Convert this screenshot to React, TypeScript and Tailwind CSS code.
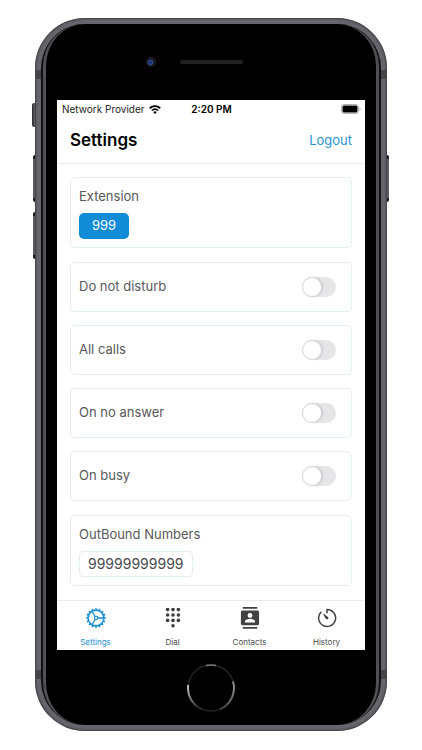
import { useState } from "react";
import type { ReactNode } from "react";

const forwardingOptions = ["Do not disturb", "All calls", "On no answer", "On busy"];

function WifiIcon() {
  return (
    <svg viewBox="0 0 24 18" className="h-[9px] w-3" aria-hidden="true">
      <path d="M1.5 6.5a15.5 15.5 0 0 1 21 0" fill="none" stroke="#000" strokeWidth="3.4" />
      <path d="M5.5 11a9.8 9.8 0 0 1 13 0" fill="none" stroke="#000" strokeWidth="3.2" />
      <path d="M12 18l-3.6-4a5.4 5.4 0 0 1 7.2 0z" fill="#000" />
    </svg>
  );
}

function BatteryIcon() {
  return (
    <svg viewBox="0 0 20 10" className="h-2.5 w-5" aria-hidden="true">
      <rect x="0.5" y="0.5" width="17" height="9" rx="2.5" fill="#fff" stroke="#b5b5b5" />
      <rect x="1.500" y="1.500" width="15" height="7" rx="1.500" fill="#000" />
      <path d="M18.7 3.4c1 .4 1 2.8 0 3.2z" fill="#8a8a8a" />
    </svg>
  );
}

function GearIcon() {
  const teeth = Array.from({ length: 16 }, (_, i) => i * 22.5);
  return (
    <svg viewBox="0 0 20 20" className="size-5" fill="none" stroke="#1d8fd6" aria-hidden="true">
      <circle cx="10" cy="10" r="7.9" strokeWidth="1.600" />
      <circle cx="10" cy="10" r="1.7" strokeWidth="1.2" />
      {teeth.map((angle) => (
        <path key={angle} d="M10 2V.2" strokeWidth="1.700" transform={`rotate(${angle} 10 10)`} />
      ))}
      <path d="M11.7 10h6M9.1 8.5 6.1 3.3M9.1 11.5l-3 5.2" strokeWidth="1.3" />
    </svg>
  );
}

function DialpadIcon() {
  const rows = [1.6, 7, 12.4];
  const columns = [4.6, 10, 15.4];
  return (
    <svg viewBox="0 0 20 20" className="size-5" fill="#3d3d3f" aria-hidden="true">
      {rows.map((y) => columns.map((x) => <circle key={`${x}-${y}`} cx={x} cy={y} r="1.8" />))}
      <circle cx="10" cy="17.8" r="1.8" />
    </svg>
  );
}

function ContactsIcon() {
  return (
    <svg viewBox="0 0 20 22" className="h-[22px] w-5" fill="#424244" aria-hidden="true">
      <path d="M2.8 0h14.4v1.8H2.8zM2.8 20h14.4v1.8H2.8z" />
      <path
        fillRule="evenodd"
        d="M2.6 3.6h14.8c1 0 1.7.7 1.7 1.7v11.2c0 1-.7 1.7-1.7 1.7H2.6c-1 0-1.7-.7-1.7-1.7V5.3c0-1 .7-1.7 1.7-1.7zM10 6a2.4 2.4 0 1 0 0 4.8A2.4 2.4 0 0 0 10 6zM5 15.400h10v-1c0-1.7-3.2-2.6-5-2.6s-5 .9-5 2.6z"
      />
    </svg>
  );
}

function HistoryIcon() {
  return (
    <svg viewBox="0 0 20 20" className="size-5" fill="none" stroke="#424244" aria-hidden="true">
      <path d="M4.200 3.900A8.500 8.500 0 1 0 10 1.500v3.700" strokeWidth="1.500" />
      <path d="M5.800 5.600c1.900 1 4.200 2.400 5.200 3.500a1.300 1.300 0 0 1-1.900 1.900C8 10 6.800 7.600 5.800 5.600z" fill="#424244" stroke="none" />
    </svg>
  );
}

function HomeButton() {
  return (
    <button type="button" aria-label="Home" className="size-12 rounded-full">
      <svg viewBox="0 0 48 48" className="size-12" fill="none" aria-hidden="true">
        <defs>
          <linearGradient id="ring-left" x1="0" y1="0" x2="0.6" y2="1">
            <stop offset="0" stopColor="#c4c4c7" />
            <stop offset="1" stopColor="#2b2b2e" />
          </linearGradient>
          <linearGradient id="ring-right" x1="1" y1="0" x2="0" y2="1">
            <stop offset="0" stopColor="#8e8e92" />
            <stop offset="1" stopColor="#3a3a3d" />
          </linearGradient>
        </defs>
        <circle cx="24" cy="24" r="23" stroke="#232326" strokeWidth="1.5" />
        <path d="M1.200 21A23 23 0 0 0 15 45.200" stroke="url(#ring-left)" strokeWidth="2" />
        <path d="M46 17.500A23 23 0 0 1 33 45.200" stroke="url(#ring-right)" strokeWidth="2" />
        <path d="M19 1.500a23 23 0 0 1 10 0" stroke="#77777a" strokeWidth="1.500" />
      </svg>
    </button>
  );
}

function Card({ children }: { children: ReactNode }) {
  return <div className="rounded-[5px] border border-[#e4eff3] px-2">{children}</div>;
}

function ToggleRow({ label }: { label: string }) {
  const [on, setOn] = useState(false);
  return (
    <Card>
      <label className="flex h-12 items-center justify-between pr-[7px] text-[13px] text-[#58585a]">
        {label}
        <span className="relative flex h-5 w-[34px]">
          <input
            type="checkbox"
            role="switch"
            checked={on}
            onChange={() => setOn(!on)}
            className="peer h-5 w-[34px] appearance-none rounded-full bg-[#e6e6e8] checked:bg-[#128cd6]"
          />
          <span className="pointer-events-none absolute top-0 left-0 size-5 rounded-full border border-[#d9d9db] bg-white shadow-[1px_0px_2px_#00000022] peer-checked:translate-x-3.5" />
        </span>
      </label>
    </Card>
  );
}

const tabs = [
  { name: "Settings", icon: <GearIcon /> },
  { name: "Dial", icon: <DialpadIcon /> },
  { name: "Contacts", icon: <ContactsIcon /> },
  { name: "History", icon: <HistoryIcon /> },
];

function Screen() {
  return (
    <div className="bg-white">
      <div className="grid h-[18px] grid-cols-3 items-center pr-1 pl-[5px] text-[10px] leading-none text-[#1c1c1e]">
        <span className="flex items-center gap-1 whitespace-nowrap">
          Network Provider
          <WifiIcon />
        </span>
        <span className="text-center font-semibold text-black">2:20 PM</span>
        <span className="flex justify-end">
          <BatteryIcon />
        </span>
      </div>

      <header className="flex h-[46px] items-center justify-between border-b border-[#e4edf2] px-[13px]">
        <h1 className="text-[17px] font-semibold text-black">Settings</h1>
        <a href="#logout" className="text-[13px] text-[#2b94cf]">
          Logout
        </a>
      </header>

      <main className="flex flex-col gap-3.5 px-[13px] pt-[13px] pb-3.5">
        <Card>
          <div className="flex h-[69px] flex-col items-start gap-[7px] pt-2">
            <h2 className="text-[13px] leading-5 text-[#58585a]">Extension</h2>
            <button type="button" className="h-[26px] rounded-[5px] bg-[#128cd6] px-[13px] text-[13px] text-white">
              999
            </button>
          </div>
        </Card>

        <div className="flex flex-col gap-[13px]">
          {forwardingOptions.map((label) => (
            <ToggleRow key={label} label={label} />
          ))}
        </div>

        <Card>
          <div className="flex h-[69px] flex-col items-start gap-[7px] pt-2">
            <h2 className="text-[13px] leading-5 text-[#58585a]">OutBound Numbers</h2>
            <button
              type="button"
              className="h-[26px] rounded-[5px] border border-[#e4eff3] px-2 text-sm text-[#4b4b4d]"
            >
              99999999999
            </button>
          </div>
        </Card>
      </main>

      <nav className="grid h-[50px] grid-cols-4 border-t border-[#e4edf2]">
        {tabs.map((tab, index) => (
          <button
            key={tab.name}
            type="button"
            className={
              index === 0
                ? "flex flex-col items-center pt-1.5 text-[8px] leading-3 text-[#1d8fd6]"
                : "flex flex-col items-center pt-1.5 text-[8px] leading-3 text-[#4b4b4d]"
            }
          >
            <span className="flex h-[22px] items-center">{tab.icon}</span>
            <span className="mt-[7px]">{tab.name}</span>
          </button>
        ))}
      </nav>
    </div>
  );
}

export default function App() {
  return (
    <div className="bg-white px-[35px] pt-[18px] pb-[19px] font-['Inter','Liberation_Sans',sans-serif]">
      <div className="relative">
        <span className="absolute top-[85px] -left-[3px] h-6 w-1 rounded-l-xs bg-linear-to-r from-[#2b2b2e] to-[#77777c]" />
        <span className="absolute top-[137px] -left-[2px] h-[47px] w-1 rounded-l-xs border-y-4 border-[#1c1c1e] bg-[#5a5a5f]" />
        <span className="absolute top-[194px] -left-[2px] h-[47px] w-1 rounded-l-xs border-y-4 border-[#1c1c1e] bg-[#5a5a5f]" />
        <span className="absolute top-[137px] -right-[2px] h-[47px] w-1 rounded-r-xs border-y-4 border-[#1c1c1e] bg-[#5a5a5f]" />

        <div className="relative overflow-hidden rounded-[50px] bg-[#65656b] p-1.5 shadow-[inset_0_0_2px_1px_#3d3d41]">
          <span className="absolute top-[52px] left-0 h-[9px] w-full bg-[#45454a]" />
          <span className="absolute bottom-[52px] left-0 h-[9px] w-full bg-[#45454a]" />
          <div className="relative rounded-[44px] border-x-2 border-[#111113] bg-black">
            <div className="rounded-[42px] border-x-[3px] border-[#505054] bg-black px-[11px]">
              <div className="grid h-[76px] grid-cols-[1fr_auto_1fr] items-center">
                <span className="mr-6 flex size-2.5 items-center justify-center justify-self-end rounded-full bg-[#1c1c22]">
                  <span className="size-[5px] rounded-full border border-[#3f60c4] bg-[#14206b]" />
                </span>
                <span className="h-1 w-[63px] rounded-full bg-[#222224]" />
              </div>
              <Screen />
              <div className="flex h-[75px] items-center justify-center">
                <HomeButton />
              </div>
            </div>
          </div>
        </div>
      </div>
    </div>
  );
}
